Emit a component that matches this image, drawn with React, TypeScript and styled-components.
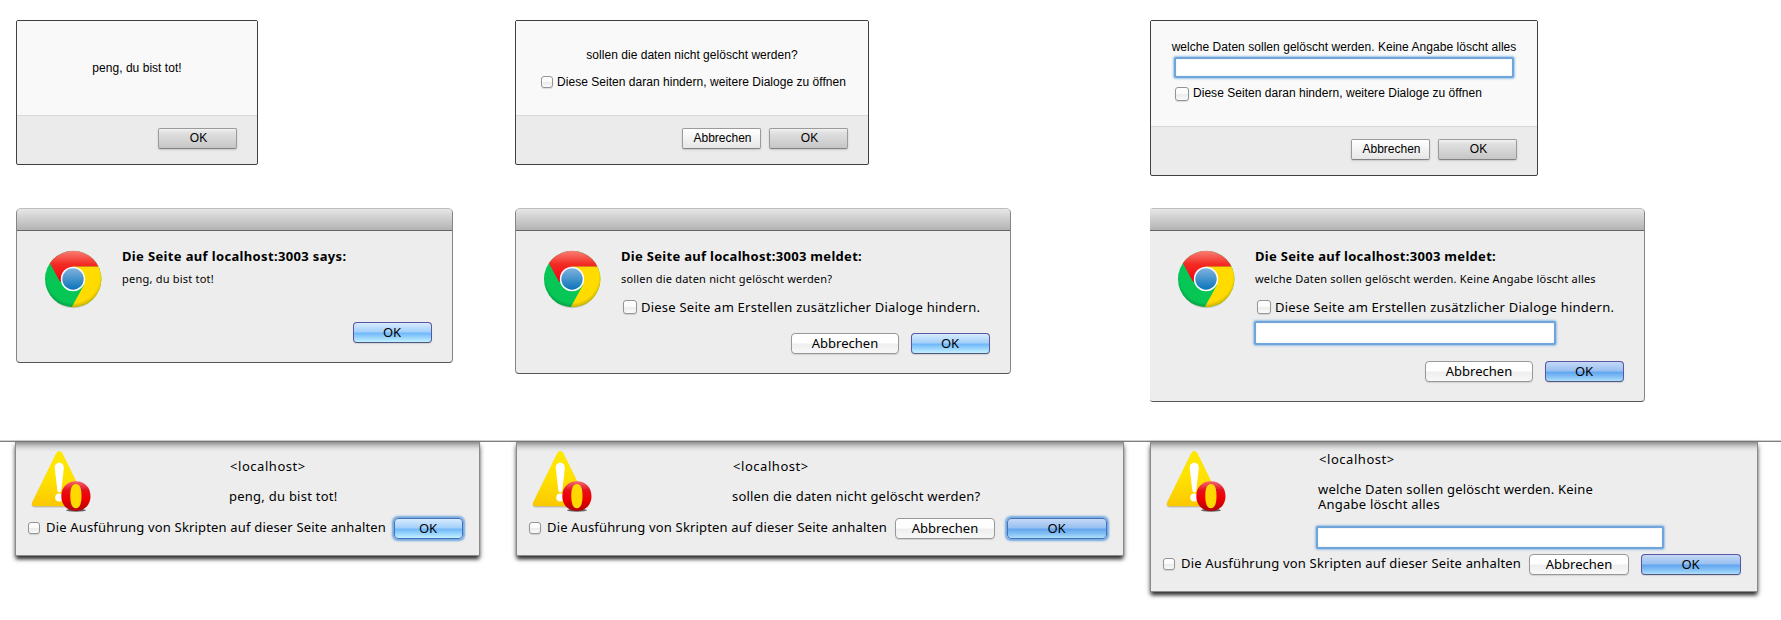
import React from 'react';
import styled, { createGlobalStyle, css } from 'styled-components';

const lucida = '"Noto Sans", "Open Sans", sans-serif';
const helvetica = '"Liberation Sans", Arial, sans-serif';

const GlobalStyle = createGlobalStyle`
  body { margin: 0; background: #fff; color: #000; }
`;

const Sheet = styled.main`
  width: 1781px;
  height: 620px;
  box-sizing: border-box;
  padding-top: 20px;
  overflow: hidden;
`;

const FirefoxRow = styled.section`
  display: grid;
  grid-template-columns: 499px 635px 1fr;
  align-items: start;
  height: 188px;
  padding-left: 16px;
  font: 12px/14px ${helvetica};
`;

const ChromeRow = styled(FirefoxRow)`
  height: 232px;
  font: 13px/16px ${lucida};
`;

const OperaRow = styled(FirefoxRow)`
  grid-template-columns: 501px 634px 1fr;
  height: 178px;
  padding-left: 15px;
  border-top: 1px solid #cfcfcf;
  font: 13px/16px ${lucida};
  background: linear-gradient(#808080, #808080) 0 0 / 100% 1px no-repeat;
  padding-top: 1px;
`;

const Line = styled.div<{ $spacing?: number; $top?: number; $size?: number; $bold?: boolean }>`
  white-space: pre;
  margin-top: ${(p) => p.$top ?? 0}px;
  letter-spacing: ${(p) => p.$spacing ?? 0}px;
  ${(p) => p.$size === 11 && css`font-size: 11px; line-height: 14px;`}
  ${(p) => p.$bold && css`font-weight: bold;`}
`;

const HostLine = styled(Line)`
  padding-left: 1px;
  letter-spacing: 0.55px;
`;

const Check = styled.span<{ $size: number; $top?: number }>`
  flex: none;
  box-sizing: border-box;
  width: ${(p) => p.$size}px;
  height: ${(p) => p.$size}px;
  margin-top: ${(p) => p.$top ?? 1}px;
  border: 1px solid #949494;
  border-radius: 3px;
  background: linear-gradient(#fff 0%, #fafafa 50%, #ececec 55%, #fbfbfb 100%);
  box-shadow: 0 1px 1px rgba(0, 0, 0, 0.12);
`;

const CheckRow = styled.label<{ $gap: number; $top?: number; $left?: number }>`
  display: flex;
  align-items: flex-start;
  gap: ${(p) => p.$gap}px;
  margin-top: ${(p) => p.$top ?? 0}px;
  margin-left: ${(p) => p.$left ?? 0}px;
`;

const Field = styled.div<{ $w: number; $h: number; $top: number; $left?: number }>`
  box-sizing: border-box;
  width: ${(p) => p.$w}px;
  height: ${(p) => p.$h}px;
  margin-top: ${(p) => p.$top}px;
  margin-left: ${(p) => p.$left ?? 0}px;
  border: 2px solid #6fa5d9;
  border-radius: 2px;
  background: #fff;
  box-shadow: 0 0 2px 1px rgba(120, 175, 228, 0.7), inset 0 0 1px #9ab4cc;
`;

const ButtonRow = styled.div<{ $gap: number; $top?: number }>`
  display: flex;
  justify-content: flex-end;
  gap: ${(p) => p.$gap}px;
  margin-top: ${(p) => p.$top ?? 0}px;
`;

/* Firefox */

const FirefoxDialog = styled.div<{ $w: number; $h: number }>`
  display: flex;
  flex-direction: column;
  box-sizing: border-box;
  width: ${(p) => p.$w}px;
  height: ${(p) => p.$h}px;
  border: 1px solid #404040;
  border-radius: 2px;
  background: #ebebeb;
  overflow: hidden;
`;

const FirefoxBody = styled.div<{ $top: number }>`
  display: flex;
  flex: 1;
  flex-direction: column;
  align-items: center;
  padding-top: ${(p) => p.$top}px;
  background: #f9f9f9;
`;

const FirefoxFooter = styled.div`
  box-sizing: border-box;
  height: 49px;
  padding: 12px 20px 0 0;
  border-top: 1px solid #d9d9d9;
`;

const FirefoxButton = styled.button<{ $dark?: boolean }>`
  box-sizing: border-box;
  width: 79px;
  height: 21px;
  padding: 0 0 1px 2px;
  border: 1px solid #9b9b9b;
  border-bottom-color: #828282;
  border-radius: 2px;
  font: inherit;
  color: #000;
  white-space: nowrap;
  background: ${(p) => (p.$dark ? 'linear-gradient(#f2f2f2, #e0e0e0 20%, #c6c6c6)' : 'linear-gradient(#fff, #f8f8f8 30%, #e6e6e6)')};
  box-shadow: 0 1px 2px rgba(0, 0, 0, 0.15);
`;

/* Aqua buttons shared by Chrome and Opera */

const aquaFill = {
  plain: 'linear-gradient(#fff 0%, #fefefe 48%, #eeeeee 52%, #f8f8f8 100%)',
  bright: 'linear-gradient(#d8ebfd 0%, #a3d0fa 46%, #71b8f9 54%, #9bd6fd 78%, #c3f2ff 100%)',
  deep: 'linear-gradient(#c5d9f6 0%, #98c0f1 46%, #62a6f0 54%, #84c0f4 78%, #aee0fb 100%)',
};

const AquaButton = styled.button<{ $w: number; $tone: keyof typeof aquaFill; $glow?: boolean }>`
  flex: none;
  box-sizing: border-box;
  width: ${(p) => p.$w}px;
  height: 21px;
  padding: 0 ${(p) => (p.$tone === 'plain' ? 0 : 1)}px 0 0;
  border: 1px solid ${(p) => (p.$tone === 'plain' ? '#989898' : p.$glow ? '#4472bd' : '#5b55a5')};
  ${(p) => p.$tone !== 'plain' && !p.$glow && css`border-bottom-color: #4f5686;`}
  border-radius: 4px;
  font: 13px/17px ${lucida};
  color: #000;
  background: ${(p) => aquaFill[p.$tone]};
  box-shadow: ${(p) => (p.$glow ? '0 0 2px 2px rgba(92, 155, 220, 0.85)' : '0 1px 1px rgba(0, 0, 0, 0.12)')};
`;

/* Chrome */

const ChromeDialog = styled.div<{ $w: number; $h: number; $cut?: boolean }>`
  box-sizing: border-box;
  width: ${(p) => p.$w}px;
  height: ${(p) => p.$h}px;
  border: 1px solid #858585;
  border-top-color: #bdbdbd;
  border-bottom-color: #555;
  border-radius: 5px 5px 4px 4px;
  ${(p) => p.$cut && css`border-left: 0; border-top-left-radius: 3px; border-bottom-left-radius: 3px;`}
  background: #ededed;
  overflow: hidden;
`;

const TitleBar = styled.div`
  box-sizing: border-box;
  height: 22px;
  border-bottom: 1px solid #656565;
  background: linear-gradient(#e6e6e6, #b3b3b3);
`;

const ChromeBody = styled.div`
  display: flex;
  gap: 21px;
  padding: 17px 20px 0 28px;
`;

const ChromeColumn = styled.div`
  flex: 1;
`;

const ChromeMark = styled.svg`
  flex: none;
  width: 56px;
  height: 60px;
  margin-top: 3px;
  overflow: visible;
`;

function ChromeLogo({ id }: { id: string }) {
  return (
    <ChromeMark viewBox="0 0 56 60">
      <defs>
        <clipPath id={id}><circle cx="28.2" cy="28" r="28.2" /></clipPath>
        <linearGradient id={`${id}r`} x2="0" y2="1"><stop stopColor="#f8837a" /><stop offset=".45" stopColor="#f32b22" /><stop offset="1" stopColor="#f20012" /></linearGradient>
        <linearGradient id={`${id}b`} x2="0" y2="1"><stop stopColor="#7fb2dd" /><stop offset="1" stopColor="#0a74ba" /></linearGradient>
        <radialGradient id={`${id}s`} cy=".45" r=".56"><stop offset=".84" stopOpacity="0" /><stop offset="1" stopOpacity=".24" /></radialGradient>
      </defs>
      <ellipse cx="28.2" cy="29.8" rx="27" ry="27.5" fill="#000" opacity=".14" />
      <g clipPath={`url(#${id})`}>
        <rect width="57" height="57" fill="#06c755" />
        <path d="M28 15.3H57V57H26.2L39 34Z" fill="#ffdb00" />
        <path d="M5 12.4L15.2 31L28 15.6H57V-1H0V4Z" fill={`url(#${id}r)`} />
        <circle cx="28.2" cy="28" r="28.2" fill={`url(#${id}s)`} />
      </g>
      <circle cx="28" cy="28" r="12.2" fill="#fff" />
      <circle cx="28" cy="28" r="10.7" fill={`url(#${id}b)`} />
    </ChromeMark>
  );
}

/* Opera */

const OperaDialog = styled.div<{ $w: number; $h: number }>`
  display: flex;
  flex-direction: column;
  box-sizing: border-box;
  width: ${(p) => p.$w}px;
  height: ${(p) => p.$h}px;
  border: 1px solid #8a8a8a;
  border-top: 0;
  background: linear-gradient(#8f8f8f, #c6c6c6 4px, #e2e2e2 7px, #ededed 10px);
  box-shadow: 0 4px 4px -1px rgba(0, 0, 0, 0.75), 0 2px 5px rgba(0, 0, 0, 0.35);
`;

const OperaTop = styled.div<{ $h: number }>`
  display: flex;
  height: ${(p) => p.$h}px;
  padding-left: 15px;
`;

const OperaColumn = styled.div<{ $left: number; $top: number }>`
  margin-left: ${(p) => p.$left}px;
  padding-top: ${(p) => p.$top}px;
`;

const OperaBottom = styled.div`
  display: flex;
  justify-content: space-between;
  padding: 0 16px 0 12px;
`;

const OperaMark = styled.svg`
  flex: none;
  width: 62px;
  height: 64px;
  margin-top: 9px;
`;

function OperaWarning({ id }: { id: string }) {
  return (
    <OperaMark viewBox="0 0 62 64">
      <defs>
        <linearGradient id={`${id}y`} x2="0" y2="1"><stop stopColor="#ffe800" /><stop offset=".5" stopColor="#ffe100" /><stop offset="1" stopColor="#fbc800" /></linearGradient>
        <linearGradient id={`${id}o`} x2="0" y2="1"><stop stopColor="#f36a70" /><stop offset=".3" stopColor="#e5101c" /><stop offset=".6" stopColor="#ee0000" /><stop offset="1" stopColor="#b00008" /></linearGradient>
      </defs>
      <path d="M25.3 2.8Q28.3-1.6 31.3 2.8L55.5 52Q57 56.4 52.5 56.4H4Q-.4 56.4 1.2 52Z" fill="#000" opacity=".2" />
      <path d="M25.3 2Q28.3-2 31.3 2L55.5 51.2Q57 55.3 52.5 55.3H4Q-.4 55.3 1.2 51.2Z" fill={`url(#${id}y)`} />
      <path d="M28.3 11.8C31.4 11.8 33 14 32.8 17.5L30.4 38.5C30.2 42.3 26.4 42.3 26.2 38.5L23.8 17.5C23.6 14 25.2 11.8 28.3 11.8Z" fill="#fff" />
      <circle cx="28.3" cy="46.5" r="4.1" fill="#fff" />
      <ellipse cx="45" cy="59.2" rx="10" ry="1.5" fill="#000" opacity=".6" />
      <ellipse cx="44.9" cy="45" rx="5.9" ry="12.4" fill="#ffd800" />
      <path fillRule="evenodd" d="M44.9 30.2C53.7 30.2 59.5 36.4 59.5 45C59.5 53.8 53.7 60 44.9 60C36.1 60 30.3 53.8 30.3 45C30.3 36.4 36.1 30.2 44.9 30.2ZM44.9 33C40.6 33 39.3 38.4 39.3 45C39.3 51.8 40.6 57.2 44.9 57.2C49.2 57.2 50.5 51.8 50.5 45C50.5 38.4 49.2 33 44.9 33Z" fill={`url(#${id}o)`} />
    </OperaMark>
  );
}

function ScriptToggle() {
  return (
    <CheckRow $gap={6} $top={1}>
      <Check $size={12} $top={3} />
      <Line $spacing={0.17}>Die Ausführung von Skripten auf dieser Seite anhalten</Line>
    </CheckRow>
  );
}

function FirefoxToggle({ size, gap, top, left }: { size: number; gap: number; top: number; left: number }) {
  return (
    <CheckRow $gap={gap} $top={top} $left={left}>
      <Check $size={size} />
      <Line $spacing={0.03}>Diese Seiten daran hindern, weitere Dialoge zu öffnen</Line>
    </CheckRow>
  );
}

function ChromeToggle() {
  return (
    <CheckRow $gap={4} $top={13} $left={2}>
      <Check $size={14} />
      <Line $spacing={0.23}>Diese Seite am Erstellen zusätzlicher Dialoge hindern.</Line>
    </CheckRow>
  );
}

function FirefoxActions({ cancel }: { cancel?: boolean }) {
  return (
    <FirefoxFooter>
      <ButtonRow $gap={8}>
        {cancel && <FirefoxButton>Abbrechen</FirefoxButton>}
        <FirefoxButton $dark>OK</FirefoxButton>
      </ButtonRow>
    </FirefoxFooter>
  );
}

export default function App() {
  return (
    <>
      <GlobalStyle />
      <Sheet>
        <FirefoxRow>
          <FirefoxDialog $w={242} $h={145}>
            <FirefoxBody $top={40}>
              <Line $spacing={0.03}>peng, du bist tot!</Line>
            </FirefoxBody>
            <FirefoxActions />
          </FirefoxDialog>

          <FirefoxDialog $w={354} $h={145}>
            <FirefoxBody $top={27}>
              <Line $spacing={0.03}>sollen die daten nicht gelöscht werden?</Line>
              <FirefoxToggle size={12} gap={4} top={13} left={3} />
            </FirefoxBody>
            <FirefoxActions cancel />
          </FirefoxDialog>

          <FirefoxDialog $w={388} $h={156}>
            <FirefoxBody $top={19}>
              <Line $spacing={0.04}>welche Daten sollen gelöscht werden. Keine Angabe löscht alles</Line>
              <div>
                <Field $w={340} $h={21} $top={3} />
                <FirefoxToggle size={14} gap={4} top={8} left={1} />
              </div>
            </FirefoxBody>
            <FirefoxActions cancel />
          </FirefoxDialog>
        </FirefoxRow>

        <ChromeRow>
          <ChromeDialog $w={437} $h={155}>
            <TitleBar />
            <ChromeBody>
              <ChromeLogo id="c1" />
              <ChromeColumn>
                <Line $bold $spacing={0.35}>Die Seite auf localhost:3003 says:</Line>
                <Line $size={11} $spacing={0.22} $top={8}>peng, du bist tot!</Line>
                <ButtonRow $gap={12} $top={36}><AquaButton $w={79} $tone="bright">OK</AquaButton></ButtonRow>
              </ChromeColumn>
            </ChromeBody>
          </ChromeDialog>

          <ChromeDialog $w={496} $h={166}>
            <TitleBar />
            <ChromeBody>
              <ChromeLogo id="c2" />
              <ChromeColumn>
                <Line $bold $spacing={0.3}>Die Seite auf localhost:3003 meldet:</Line>
                <Line $size={11} $spacing={0.19} $top={8}>sollen die daten nicht gelöscht werden?</Line>
                <ChromeToggle />
                <ButtonRow $gap={12} $top={18}>
                  <AquaButton $w={108} $tone="plain">Abbrechen</AquaButton>
                  <AquaButton $w={79} $tone="bright">OK</AquaButton>
                </ButtonRow>
              </ChromeColumn>
            </ChromeBody>
          </ChromeDialog>

          <ChromeDialog $w={495} $h={194} $cut>
            <TitleBar />
            <ChromeBody>
              <ChromeLogo id="c3" />
              <ChromeColumn>
                <Line $bold $spacing={0.3}>Die Seite auf localhost:3003 meldet:</Line>
                <Line $size={11} $spacing={0.19} $top={8}>welche Daten sollen gelöscht werden. Keine Angabe löscht alles</Line>
                <ChromeToggle />
                <Field $w={302} $h={24} $top={6} $left={-1} />
                <ButtonRow $gap={12} $top={16}>
                  <AquaButton $w={108} $tone="plain">Abbrechen</AquaButton>
                  <AquaButton $w={79} $tone="deep">OK</AquaButton>
                </ButtonRow>
              </ChromeColumn>
            </ChromeBody>
          </ChromeDialog>
        </ChromeRow>

        <OperaRow>
          <OperaDialog $w={465} $h={114}>
            <OperaTop $h={76}>
              <OperaWarning id="o1" />
              <OperaColumn $left={136} $top={16}>
                <HostLine>{'<localhost>'}</HostLine>
                <Line $spacing={0.25} $top={14}>peng, du bist tot!</Line>
              </OperaColumn>
            </OperaTop>
            <OperaBottom>
              <ScriptToggle />
              <AquaButton $w={69} $tone="bright" $glow>OK</AquaButton>
            </OperaBottom>
          </OperaDialog>

          <OperaDialog $w={608} $h={114}>
            <OperaTop $h={76}>
              <OperaWarning id="o2" />
              <OperaColumn $left={138} $top={16}>
                <HostLine>{'<localhost>'}</HostLine>
                <Line $spacing={0.19} $top={14}>sollen die daten nicht gelöscht werden?</Line>
              </OperaColumn>
            </OperaTop>
            <OperaBottom>
              <ScriptToggle />
              <ButtonRow $gap={12}>
                <AquaButton $w={100} $tone="plain">Abbrechen</AquaButton>
                <AquaButton $w={100} $tone="deep" $glow>OK</AquaButton>
              </ButtonRow>
            </OperaBottom>
          </OperaDialog>

          <OperaDialog $w={608} $h={150}>
            <OperaTop $h={112}>
              <OperaWarning id="o3" />
              <OperaColumn $left={90} $top={9}>
                <HostLine>{'<localhost>'}</HostLine>
                <Line $spacing={0.17} $top={14}>welche Daten sollen gelöscht werden. Keine</Line>
                <Line $spacing={0.22} $top={-1}>Angabe löscht alles</Line>
                <Field $w={348} $h={23} $top={14} $left={-2} />
              </OperaColumn>
            </OperaTop>
            <OperaBottom>
              <ScriptToggle />
              <ButtonRow $gap={12}>
                <AquaButton $w={100} $tone="plain">Abbrechen</AquaButton>
                <AquaButton $w={100} $tone="deep">OK</AquaButton>
              </ButtonRow>
            </OperaBottom>
          </OperaDialog>
        </OperaRow>
      </Sheet>
    </>
  );
}
